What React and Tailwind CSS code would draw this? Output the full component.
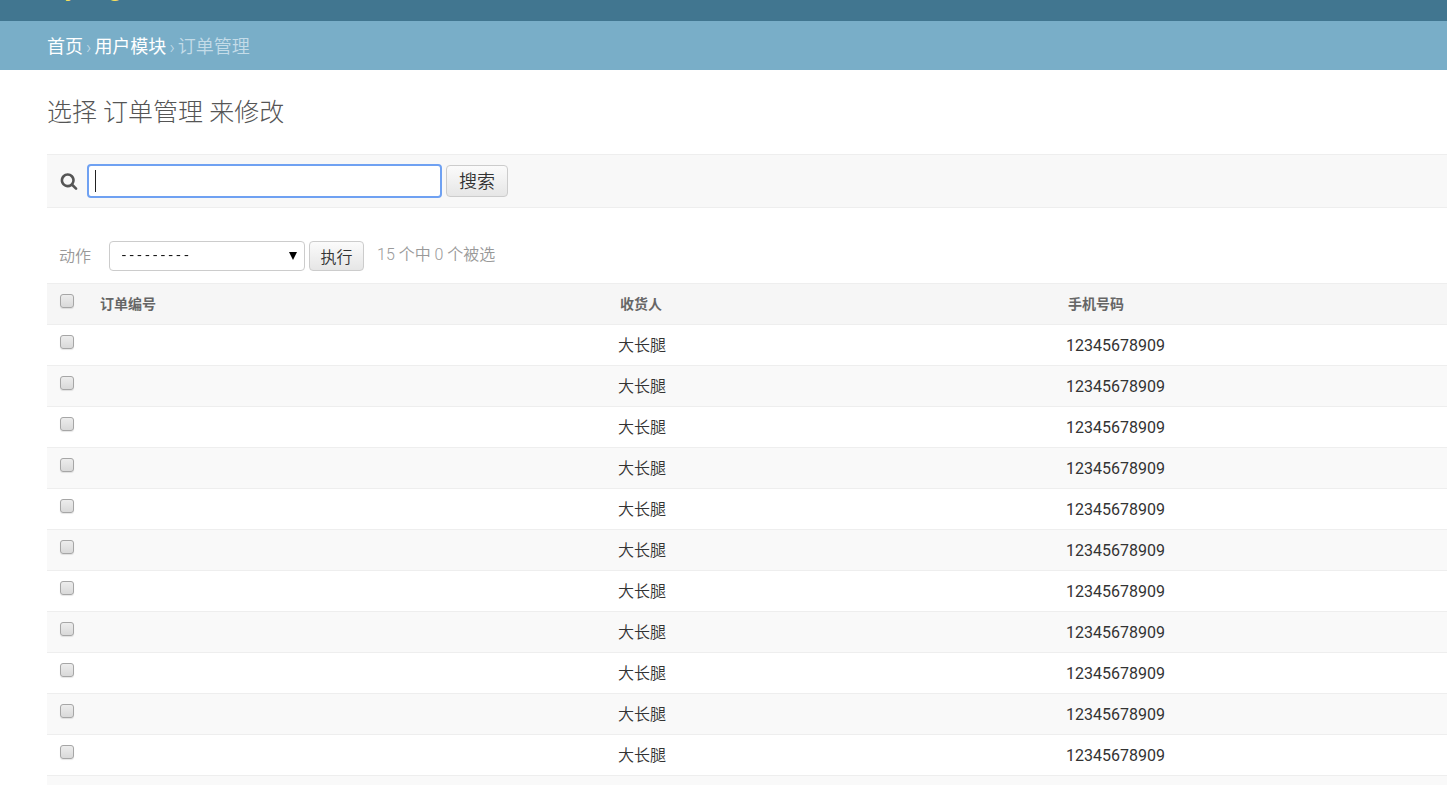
import React from "react";

const orders = Array.from({ length: 15 }, (_, i) => ({
  id: i + 1,
  receiver: "大长腿",
  phone: "12345678909",
}));

const checkbox =
  "block h-3.5 w-3.5 appearance-none rounded-[3px] border border-[#a6a6a6] bg-linear-to-b from-[#ededed] to-[#d9d9d9] shadow-[0_1px_1px_rgba(0,0,0,0.1)] checked:bg-none checked:bg-[#79aec8]";

const button =
  "rounded border border-[#ccc] bg-linear-to-b from-[#fbfbfb] to-[#e6e6e6] text-center text-[#333]";

function SearchIcon() {
  return (
    <svg
      viewBox="0 0 1792 1792"
      className="h-[18px] w-[18px] fill-[#555]"
      aria-hidden="true"
    >
      <path d="M1216 832q0-185-131.5-316.500t-316.500-131.500-316.500 131.500-131.500 316.500 131.500 316.500 316.500 131.500 316.500-131.500 131.500-316.500zm512 832q0 52-38 90t-90 38q-54 0-90-38l-343-342q-179 124-399 124-143 0-273.500-55.500t-225-150-150-225-55.500-273.500 55.500-273.500 150-225 225-150 273.500-55.500 273.500 55.500 225 150 150 225 55.500 273.500q0 220-124 399l343 343q37 37 37 90z" />
    </svg>
  );
}

export default function App() {
  return (
    <div className="h-screen overflow-hidden bg-white font-['Roboto','Noto_Sans_CJK_SC',sans-serif] text-base font-[350] text-[#333]">
      <header className="flex h-[21px] items-end overflow-hidden bg-[#417690] pb-[21px] pl-[47px]">
        <h1 className="text-[30px] leading-[30px] font-normal text-[#f5dd5d]">
          Django
        </h1>
      </header>

      <nav className="flex h-[49px] items-center gap-[3px] bg-[#79aec8] pt-0.5 pl-[47px] text-lg text-[#c4dce8]">
        <a href="#home" className="font-normal text-white">首页</a>
        <span>›</span>
        <a href="#users" className="font-normal text-white">用户模块</a>
        <span>›</span>
        <span>订单管理</span>
      </nav>

      <main className="pl-[47px]">
        <h2 className="pt-[25px] text-[25px] leading-9 font-light text-[#555]">
          选择 订单管理 来修改
        </h2>

        <form
          onSubmit={(e) => e.preventDefault()}
          className="mt-[23px] flex h-[54px] items-center border-y border-[#eee] bg-[#f8f8f8] pl-[13px]"
        >
          <label htmlFor="searchbar" className="mr-[9px]" aria-label="搜索">
            <SearchIcon />
          </label>
          <div className="relative mr-1">
            <input
              id="searchbar"
              type="text"
              autoFocus
              className="block h-[34px] w-[355px] rounded border-2 border-[#6fa1f2] bg-white px-1.5 text-lg caret-transparent outline-none"
            />
            <span className="pointer-events-none absolute top-1.5 left-2 h-[22px] w-px bg-[#222]" />
          </div>
          <button type="submit" className={`${button} h-8 w-[62px] pt-0.5 text-lg leading-7`}>
            搜索
          </button>
        </form>

        <div className="mt-[33px] flex h-[30px] items-center pl-3 text-[#999]">
          <label htmlFor="action" className="mr-[18px] pt-0.5">动作</label>
          <div className="relative mr-1">
            <select
              id="action"
              className="block h-[30px] w-[196px] appearance-none rounded border border-[#ccc] bg-white pl-2.5 font-['Liberation_Mono',monospace] text-[13px] font-normal text-black"
            >
              <option>---------</option>
            </select>
            <svg
              viewBox="0 0 8 8"
              className="pointer-events-none absolute top-[11px] right-2 h-2 w-2 fill-black"
              aria-hidden="true"
            >
              <path d="M0 0h8L4 8z" />
            </svg>
          </div>
          <button type="button" className={`${button} h-[30px] w-[55px] pt-0.5 leading-7`}>
            执行
          </button>
          <span className="ml-[13px] pb-0.5">15 个中 0 个被选</span>
        </div>

        <table className="mt-3 w-full table-fixed border-collapse text-left">
          <colgroup>
            <col className="w-[41px]" />
            <col className="w-[37%]" />
            <col className="w-[32%]" />
            <col />
          </colgroup>
          <thead>
            <tr className="h-[41px] border-y border-[#eee] bg-[#f6f6f6] text-sm text-[#666]">
              <th className="pt-2.5 pl-[13px] align-top">
                <input type="checkbox" aria-label="全选" className={checkbox} />
              </th>
              <th className="pl-3 font-bold">订单编号</th>
              <th className="pl-3.5 font-bold">收货人</th>
              <th className="pl-3.5 font-bold">手机号码</th>
            </tr>
          </thead>
          <tbody>
            {orders.map((o) => (
              <tr key={o.id} className="h-[41px] border-b border-[#eee] even:bg-[#f9f9f9]">
                <td className="pt-2.5 pl-[13px] align-top">
                  <input
                    type="checkbox"
                    aria-label={`${o.receiver} ${o.id}`}
                    className={checkbox}
                  />
                </td>
                <td />
                <td className="pt-0.5 pl-3">{o.receiver}</td>
                <td className="pt-0.5 pl-3 font-normal">{o.phone}</td>
              </tr>
            ))}
          </tbody>
        </table>
      </main>
    </div>
  );
}
